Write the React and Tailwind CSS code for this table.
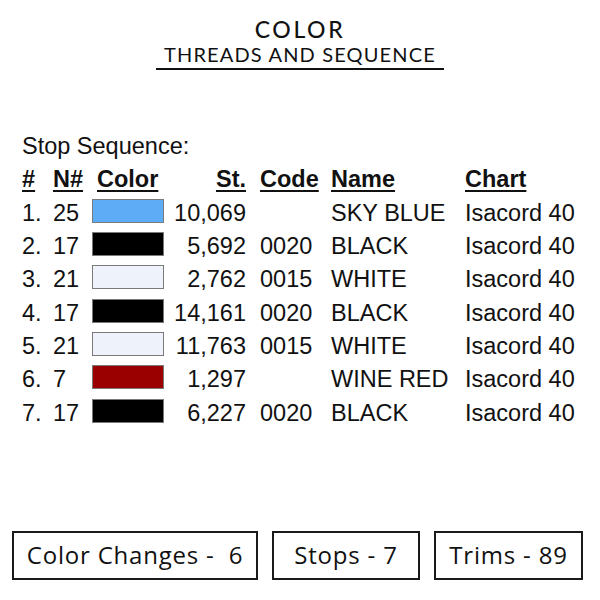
const rows = [
  { n: "1.", stops: "25", color: "bg-[#5eacf6]", st: "10,069", code: "", name: "SKY BLUE" },
  { n: "2.", stops: "17", color: "bg-black", st: "5,692", code: "0020", name: "BLACK" },
  { n: "3.", stops: "21", color: "bg-[#eef2fb]", st: "2,762", code: "0015", name: "WHITE" },
  { n: "4.", stops: "17", color: "bg-black", st: "14,161", code: "0020", name: "BLACK" },
  { n: "5.", stops: "21", color: "bg-[#eef2fb]", st: "11,763", code: "0015", name: "WHITE" },
  { n: "6.", stops: "7", color: "bg-[#9a0000]", st: "1,297", code: "", name: "WINE RED" },
  { n: "7.", stops: "17", color: "bg-black", st: "6,227", code: "0020", name: "BLACK" },
];

const cols = "grid grid-cols-[31px_39px_72px_82px_85px_134px_1fr]";
const head = "underline decoration-2 underline-offset-[3px]";

function SummaryBox({ className, children }) {
  return (
    <div
      className={`flex h-[49px] items-center justify-center border-2 border-[#1a1a1a] text-[24px] tracking-[0.8px] text-[#111] ${className}`}
    >
      {children}
    </div>
  );
}

export default function App() {
  return (
    <div className="h-[600px] w-[600px] bg-white text-[#111]">
      <div
        className="flex flex-col items-center pt-[17px]"
        style={{ fontFamily: 'Lato, "Open Sans", sans-serif' }}
      >
        <div className="text-[23px] font-medium leading-[24px] tracking-[2.6px]">COLOR</div>
        <div className="mt-[1px] border-b-2 border-[#111] px-[8px] pb-[2px] text-[20px] leading-[24px] tracking-[1.15px]">
          THREADS AND SEQUENCE
        </div>
      </div>

      <div
        className="mt-[60px] pl-[22px] text-[23.5px] leading-[33.33px]"
        style={{ fontFamily: '"Liberation Sans", Arial, sans-serif' }}
      >
        <div>Stop Sequence:</div>
        <div className={`${cols} font-bold`}>
          <div><span className={head}>#</span></div>
          <div><span className={head}>N#</span></div>
          <div className="pl-[5px]"><span className={head}>Color</span></div>
          <div className="text-right"><span className={head}>St.</span></div>
          <div className="pl-[14px]"><span className={head}>Code</span></div>
          <div><span className={head}>Name</span></div>
          <div><span className={head}>Chart</span></div>
        </div>
        {rows.map((r) => (
          <div key={r.n} className={cols}>
            <div>{r.n}</div>
            <div>{r.stops}</div>
            <div className="pt-[2px]">
              <div className={`h-[24px] w-[72px] border border-[#7a7a7a] ${r.color}`} />
            </div>
            <div className="text-right">{r.st}</div>
            <div className="pl-[14px]">{r.code}</div>
            <div>{r.name}</div>
            <div>Isacord 40</div>
          </div>
        ))}
      </div>

      <div
        className="mt-[101px] flex gap-[14px] pl-[12px]"
        style={{ fontFamily: '"Open Sans", sans-serif' }}
      >
        <SummaryBox className="w-[246px]">Color Changes -&nbsp; 6</SummaryBox>
        <SummaryBox className="w-[148px]">Stops - 7</SummaryBox>
        <SummaryBox className="w-[149px]">Trims - 89</SummaryBox>
      </div>
    </div>
  );
}
